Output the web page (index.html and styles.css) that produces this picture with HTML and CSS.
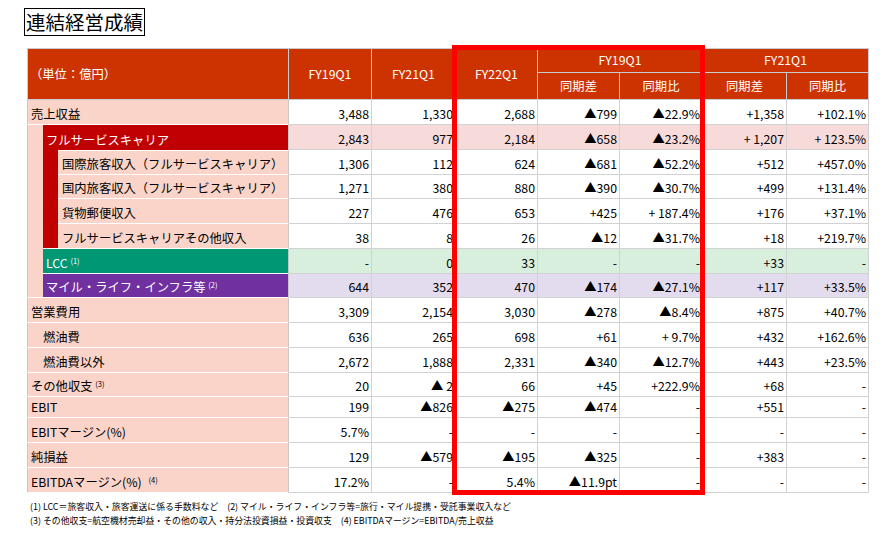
FILE: index.html
```html
<!DOCTYPE html>
<html lang="ja">
<head>
<meta charset="utf-8">
<title>連結経営成績</title>
<link rel="stylesheet" href="styles.css">
</head>
<body>
<div class="page">
  <div class="title">連結経営成績</div>
  <table class="fin">
    <colgroup>
      <col class="ca"><col class="cb"><col class="cc">
      <col class="w83"><col class="w84"><col class="w82"><col class="w82"><col class="w83"><col class="w84"><col class="w82">
    </colgroup>
    <thead>
      <tr class="h1">
        <th colspan="3" rowspan="2" class="unit">（単位：億円）</th>
        <th rowspan="2">FY19Q1</th>
        <th rowspan="2">FY21Q1</th>
        <th rowspan="2">FY22Q1</th>
        <th colspan="2">FY19Q1</th>
        <th colspan="2">FY21Q1</th>
      </tr>
      <tr class="h2">
        <th>同期差</th><th>同期比</th><th>同期差</th><th>同期比</th>
      </tr>
    </thead>
    <tbody>
      <tr class="r25">
        <td colspan="3" class="lab first">売上収益</td>
        <td>3,488</td><td>1,330</td><td>2,688</td><td>▲799</td><td>▲22.9%</td><td>+1,358</td><td>+102.1%</td>
      </tr>
      <tr class="r25 fsc">
        <td rowspan="7" class="spacer"></td>
        <td colspan="2" class="lab red">フルサービスキャリア</td>
        <td>2,843</td><td>977</td><td>2,184</td><td>▲658</td><td>▲23.2%</td><td>+ 1,207</td><td>+ 123.5%</td>
      </tr>
      <tr class="r25">
        <td rowspan="4" class="strip"></td>
        <td class="lab sub top">国際旅客収入（フルサービスキャリア）</td>
        <td>1,306</td><td>112</td><td>624</td><td>▲681</td><td>▲52.2%</td><td>+512</td><td>+457.0%</td>
      </tr>
      <tr class="r24">
        <td class="lab sub">国内旅客収入（フルサービスキャリア）</td>
        <td>1,271</td><td>380</td><td>880</td><td>▲390</td><td>▲30.7%</td><td>+499</td><td>+131.4%</td>
      </tr>
      <tr class="r25">
        <td class="lab sub">貨物郵便収入</td>
        <td>227</td><td>476</td><td>653</td><td>+425</td><td>+ 187.4%</td><td>+176</td><td>+37.1%</td>
      </tr>
      <tr class="r25">
        <td class="lab sub">フルサービスキャリアその他収入</td>
        <td>38</td><td>8</td><td>26</td><td>▲12</td><td>▲31.7%</td><td>+18</td><td>+219.7%</td>
      </tr>
      <tr class="r25 lcc">
        <td colspan="2" class="lab green">LCC <sup class="fn">(1)</sup></td>
        <td>-</td><td>0</td><td>33</td><td>-</td><td>-</td><td>+33</td><td>-</td>
      </tr>
      <tr class="r24 mile">
        <td colspan="2" class="lab purple">マイル・ライフ・インフラ等 <sup class="fn">(2)</sup></td>
        <td>644</td><td>352</td><td>470</td><td>▲174</td><td>▲27.1%</td><td>+117</td><td>+33.5%</td>
      </tr>
      <tr class="r25">
        <td colspan="3" class="lab first">営業費用</td>
        <td>3,309</td><td>2,154</td><td>3,030</td><td>▲278</td><td>▲8.4%</td><td>+875</td><td>+40.7%</td>
      </tr>
      <tr class="r25">
        <td colspan="3" class="lab first indent">燃油費</td>
        <td>636</td><td>265</td><td>698</td><td>+61</td><td>+ 9.7%</td><td>+432</td><td>+162.6%</td>
      </tr>
      <tr class="r25">
        <td colspan="3" class="lab first indent">燃油費以外</td>
        <td>2,672</td><td>1,888</td><td>2,331</td><td>▲340</td><td>▲12.7%</td><td>+443</td><td>+23.5%</td>
      </tr>
      <tr class="r24">
        <td colspan="3" class="lab first">その他収支 <sup class="fn">(3)</sup></td>
        <td>20</td><td>▲ 2</td><td>66</td><td>+45</td><td>+222.9%</td><td>+68</td><td>-</td>
      </tr>
      <tr class="r21">
        <td colspan="3" class="lab first">EBIT</td>
        <td>199</td><td>▲826</td><td>▲275</td><td>▲474</td><td>-</td><td>+551</td><td>-</td>
      </tr>
      <tr class="r25">
        <td colspan="3" class="lab first">EBITマージン(%)</td>
        <td>5.7%</td><td>-</td><td>-</td><td>-</td><td>-</td><td>-</td><td>-</td>
      </tr>
      <tr class="r25">
        <td colspan="3" class="lab first">純損益</td>
        <td>129</td><td>▲579</td><td>▲195</td><td>▲325</td><td>-</td><td>+383</td><td>-</td>
      </tr>
      <tr class="r25">
        <td colspan="3" class="lab first">EBITDAマージン(%) <sup class="fn fn-gap">(4)</sup></td>
        <td>17.2%</td><td>-</td><td>5.4%</td><td>▲11.9pt</td><td>-</td><td>-</td><td>-</td>
      </tr>
    </tbody>
  </table>
  <div class="notes">
    <p>(1) LCC＝旅客収入・旅客運送に係る手数料など　(2) マイル・ライフ・インフラ等=旅行・マイル提携・受託事業収入など</p>
    <p>(3) その他収支=航空機材売却益・その他の収入・持分法投資損益・投資収支　(4) EBITDAマージン=EBITDA/売上収益</p>
  </div>
  <div class="highlight"></div>
</div>
</body>
</html>
```
FILE: styles.css
```css
* { box-sizing: border-box; }
body {
  margin: 0;
  background: #ffffff;
  color: #000000;
  font-family: "Noto Sans CJK JP", "Noto Sans", sans-serif;
  text-spacing-trim: space-all;
  font-feature-settings: "chws" 0, "halt" 0, "palt" 0;
}
.page {
  position: relative;
  padding: 8px 0 0 24px;
}
.title {
  width: fit-content;
  border: 1px solid #000;
  font-size: 19.5px;
  line-height: 26px;
  padding: 0 1px;
}
.fin {
  margin: 12px 0 0 3px;
  width: 842px;
  table-layout: fixed;
  border-collapse: separate;
  border-spacing: 0;
  font-size: 12.3px;
  line-height: 15px;
}
.ca { width: 16px; }
.cb { width: 15px; }
.cc { width: 231px; }
.w82 { width: 82px; }
.w83 { width: 83px; }
.w84 { width: 84px; }

.fin th {
  background: #cc3300;
  color: #ffffff;
  font-weight: normal;
  text-align: center;
  border-right: 1px solid #c6ccd2;
  border-bottom: 1px solid #c6ccd2;
  padding: 0;
}
.h1 th { border-top: 1px solid #c6ccd2; }
.h1 { height: 25px; }
.h2 { height: 27px; }
.fin th.unit {
  text-align: left;
  padding-left: 2px;
  border-left: 1px solid #c6ccd2;
}

.fin td {
  text-align: right;
  vertical-align: bottom;
  padding: 0 2px 2px 0;
  border-right: 1px solid #d2d2d2;
  border-bottom: 1px solid #d2d2d2;
  white-space: nowrap;
  overflow: hidden;
}
.r25 { height: 25px; }
.r24 { height: 24px; }
.r21 { height: 21px; }

.fsc td { background: #f7dbdb; }
.lcc td { background: #d9efdd; }
.mile td { background: #e3dbee; }

.fin td.lab {
  text-align: left;
  background: #fad4c9;
  border-bottom: 1px solid #ffffff;
  border-right: 1px solid #c8c8c8;
  padding-left: 3px;
}
.fin td.first { border-left: 1px solid #c8c8c8; }
.fin td.indent { padding-left: 15px; }
.fin td.spacer {
  background: #fad4c9;
  border-left: 1px solid #c8c8c8;
  border-right: 0;
  border-bottom: 1px solid #ffffff;
  padding: 0;
}
.fin td.red {
  background: #c00000;
  color: #ffffff;
  border-bottom: 0;
}
.fin td.strip {
  background: #c00000;
  border-right: 0;
  border-bottom: 1px solid #ffffff;
  padding: 0;
}
.fin td.sub { padding-left: 4px; }
.fin td.top { border-top: 1px solid #ffffff; }
.fin td.green {
  background: #009775;
  color: #ffffff;
}
.fin td.purple {
  background: #7030a0;
  color: #ffffff;
}
.fn {
  font-size: 7.5px;
  line-height: 0;
  vertical-align: 4px;
}
.fn-gap { margin-left: 4px; }

.notes {
  margin: 7px 0 0 6px;
  font-size: 8.9px;
  line-height: 14px;
}
.notes p { margin: 0; white-space: nowrap; }

.highlight {
  position: absolute;
  left: 452px;
  top: 45px;
  width: 253px;
  height: 450px;
  border: 5px solid #ff0000;
  pointer-events: none;
}
```
